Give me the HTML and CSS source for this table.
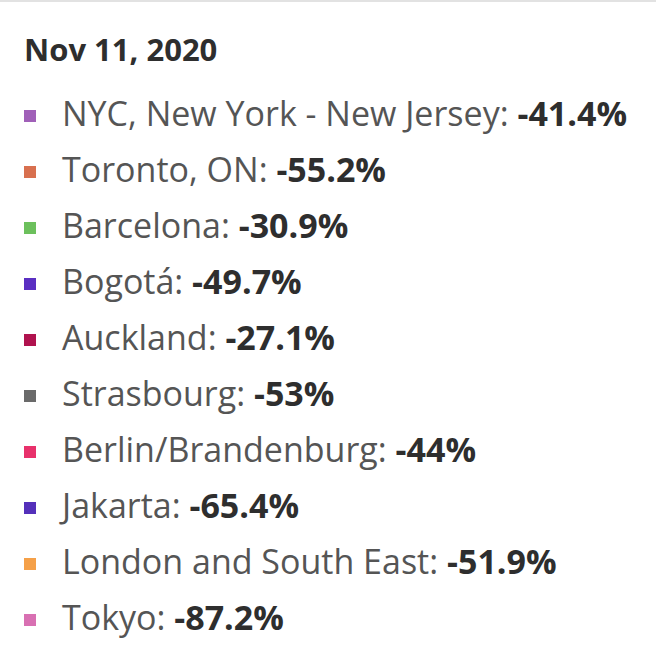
FILE: index.html
```html
<!DOCTYPE html>
<html>
<head>
<meta charset="utf-8">
<link rel="stylesheet" href="styles.css">
</head>
<body>
<div class="tooltip">
  <div class="title">Nov 11, 2020</div>
  <ul class="series">
    <li class="row"><span class="sq c1"></span><span class="label">NYC, New York - New Jersey: <b>-41.4%</b></span></li>
    <li class="row"><span class="sq c2"></span><span class="label">Toronto, ON: <b>-55.2%</b></span></li>
    <li class="row"><span class="sq c3"></span><span class="label">Barcelona: <b>-30.9%</b></span></li>
    <li class="row"><span class="sq c4"></span><span class="label">Bogotá: <b>-49.7%</b></span></li>
    <li class="row"><span class="sq c5"></span><span class="label">Auckland: <b>-27.1%</b></span></li>
    <li class="row"><span class="sq c6"></span><span class="label">Strasbourg: <b>-53%</b></span></li>
    <li class="row"><span class="sq c7"></span><span class="label">Berlin/Brandenburg: <b>-44%</b></span></li>
    <li class="row"><span class="sq c8"></span><span class="label">Jakarta: <b>-65.4%</b></span></li>
    <li class="row"><span class="sq c9"></span><span class="label">London and South East: <b>-51.9%</b></span></li>
    <li class="row"><span class="sq c10"></span><span class="label">Tokyo: <b>-87.2%</b></span></li>
  </ul>
</div>
</body>
</html>
```

FILE: styles.css
```css
html, body {
  margin: 0;
  padding: 0;
  background: #ffffff;
}
.tooltip {
  border-top: 2px solid #e2e2e2;
  width: 656px;
  height: 657px;
  box-sizing: border-box;
  padding: 27px 0 0 24px;
  font-family: "Open Sans", "Liberation Sans", sans-serif;
}
.title {
  font-size: 31px;
  font-weight: 700;
  color: #2e2e2e;
  line-height: 40px;
  margin-bottom: 16px;
}
.series {
  list-style: none;
  margin: 0;
  padding: 0;
}
.row {
  display: flex;
  align-items: center;
  height: 56px;
  font-size: 34px;
  color: #555555;
}
.sq {
  width: 12px;
  height: 12px;
  margin-right: 26px;
  flex: none;
  position: relative;
  top: 3px;
}
.label b {
  font-weight: 700;
  color: #2e2e2e;
}
.c1 { background: #a060b8; }
.c2 { background: #d8704f; }
.c3 { background: #6cc05c; }
.c4 { background: #5a2fc2; }
.c5 { background: #b0124e; }
.c6 { background: #6a6a6a; }
.c7 { background: #e8316b; }
.c8 { background: #5430ba; }
.c9 { background: #f5a048; }
.c10 { background: #d870b2; }
```
